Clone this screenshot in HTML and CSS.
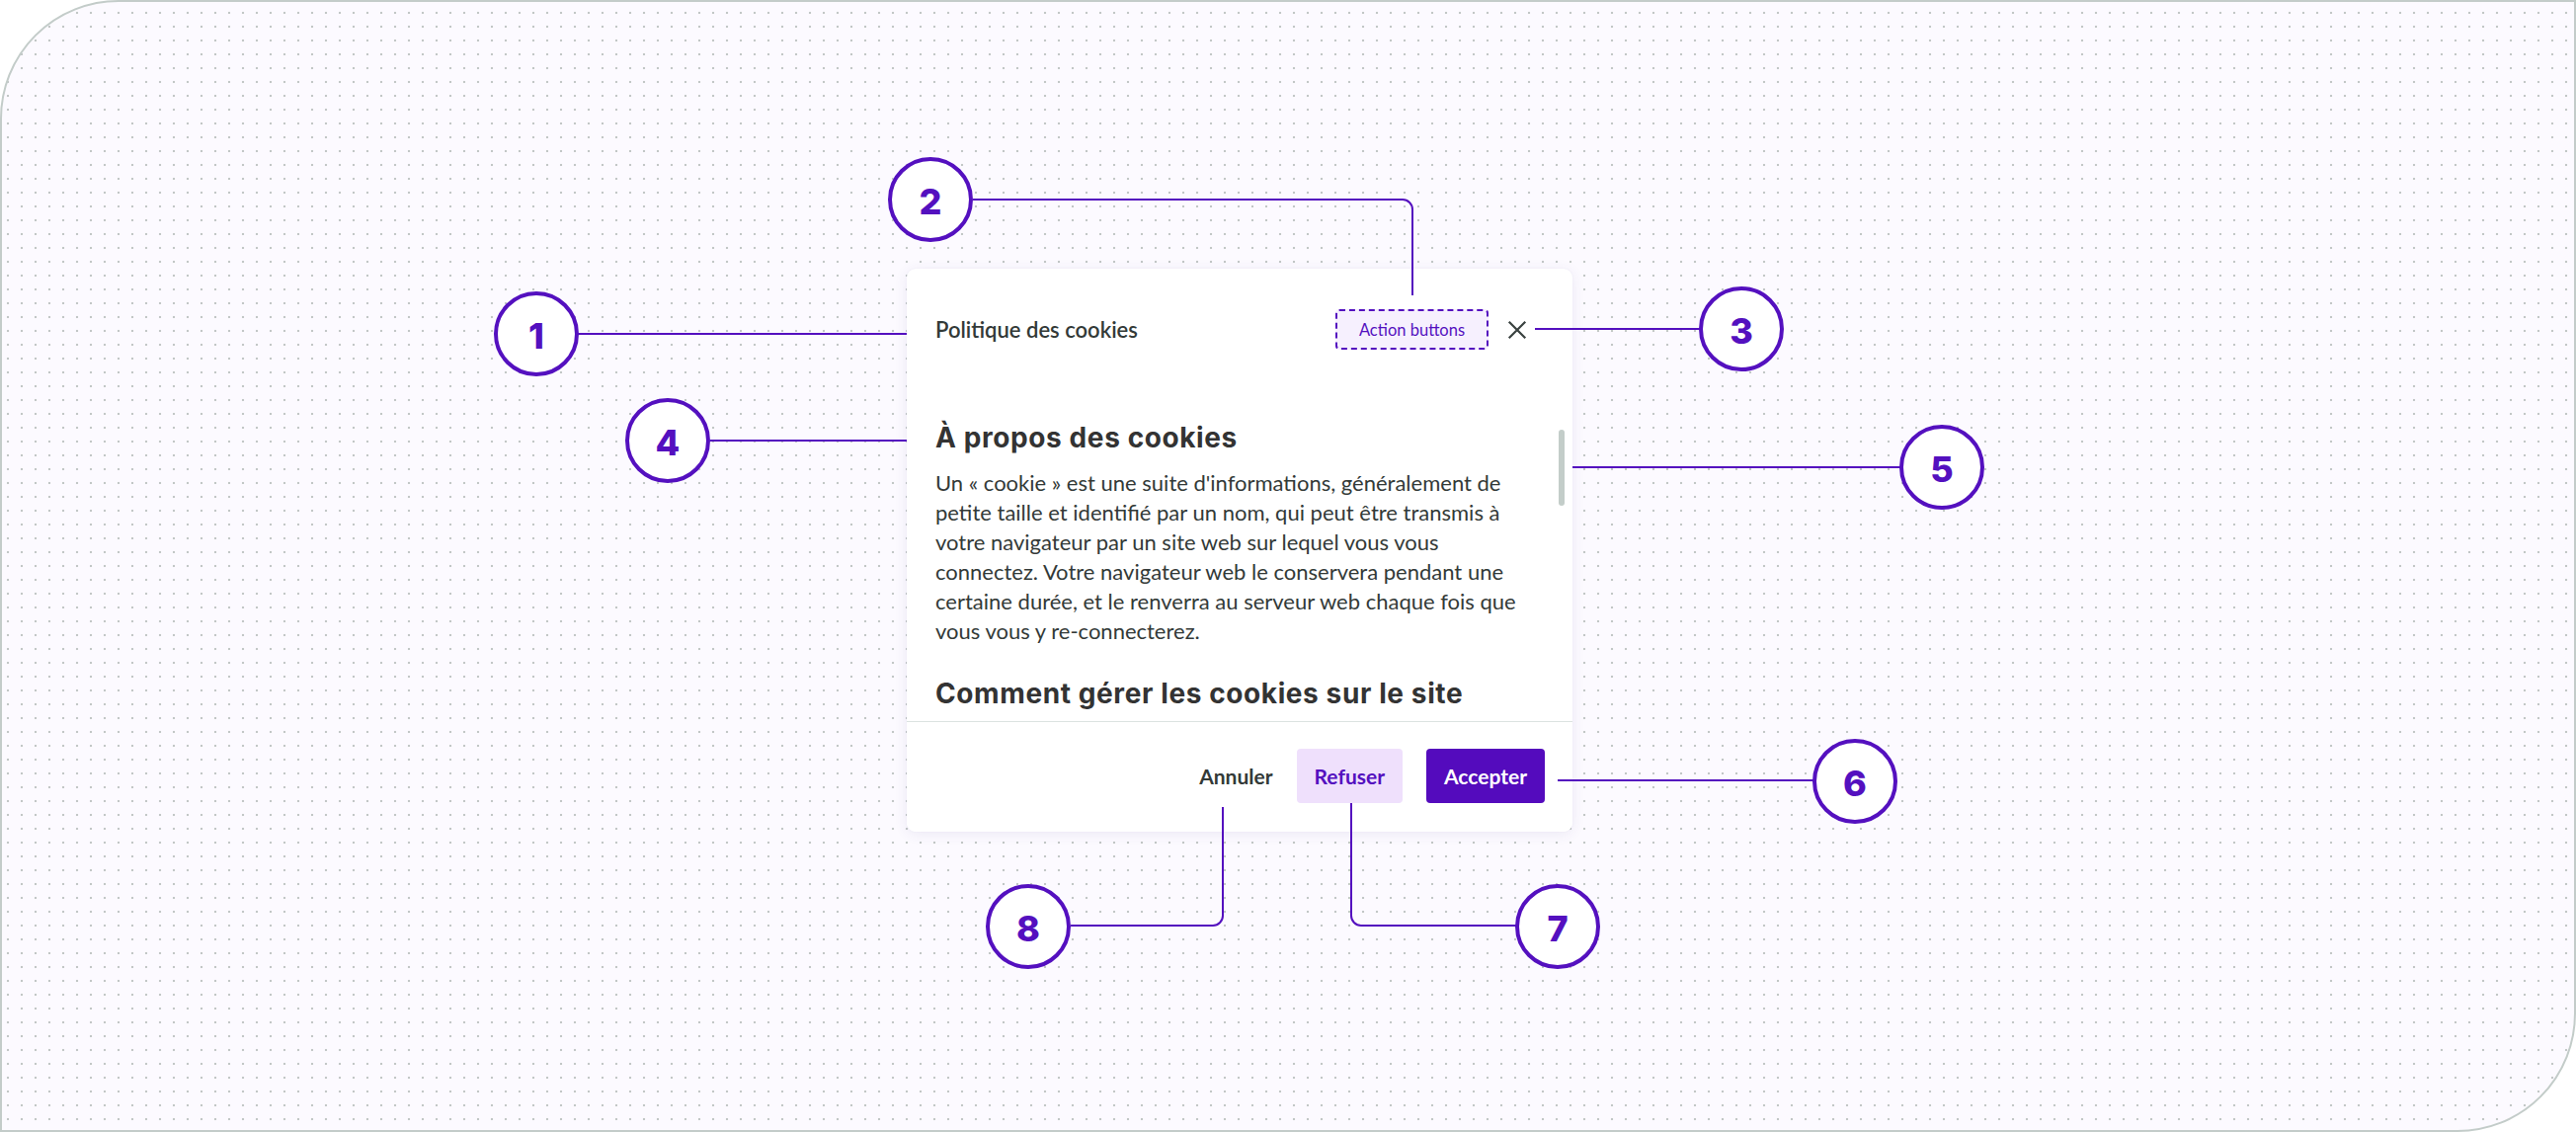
FILE: index.html
```html
<!DOCTYPE html>
<html lang="fr">
<head>
<meta charset="utf-8">
<title>Politique des cookies – annotations</title>
<link rel="stylesheet" href="styles.css">
</head>
<body>
<div class="frame">
  <div class="dialog">
    <div class="dialog-header">
      <h1 class="dialog-title">Politique des cookies</h1>
      <div class="header-actions">
        <span class="action-slot">Action buttons</span>
        <button class="close-btn" aria-label="Fermer">
          <svg viewBox="0 0 20 20" width="20" height="20"><path d="M2.5 2.5 L17.5 17.5 M17.5 2.5 L2.5 17.5" fill="none" stroke="currentColor" stroke-width="2.2" stroke-linecap="square"/></svg>
        </button>
      </div>
    </div>
    <div class="dialog-body">
      <h2 class="section-title">À propos des cookies</h2>
      <p class="section-text">Un « cookie » est une suite d'informations, généralement de<br>
        petite taille et identifié par un nom, qui peut être transmis à<br>
        votre navigateur par un site web sur lequel vous vous<br>
        connectez. Votre navigateur web le conservera pendant une<br>
        certaine durée, et le renverra au serveur web chaque fois que<br>
        vous vous y re-connecterez.</p>
      <h2 class="section-title section-title--next">Comment gérer les cookies sur le site euro.fr ?</h2>
      <div class="scroll-thumb"></div>
    </div>
    <div class="dialog-footer">
      <button class="btn btn-tertiary">Annuler</button>
      <button class="btn btn-secondary">Refuser</button>
      <button class="btn btn-primary">Accepter</button>
    </div>
  </div>
</div>
<svg class="callouts" width="2608" height="1146" viewBox="0 0 2608 1146">
  <g class="leader">
    <path d="M585 338 H918"/>
    <path d="M985 202 H1420 A10 10 0 0 1 1430 212 V299"/>
    <path d="M1554 333 H1722"/>
    <path d="M719 446 H918"/>
    <path d="M1592 473 H1925"/>
    <path d="M1577 790 H1837"/>
    <path d="M1368 813 V927 A10 10 0 0 0 1378 937 H1536"/>
    <path d="M1238 817 V927 A10 10 0 0 1 1228 937 H1084"/>
  </g>
  <g class="badge"><circle cx="543" cy="338" r="41"/><text x="543" y="340">1</text></g>
  <g class="badge"><circle cx="942" cy="202" r="41"/><text x="942" y="204">2</text></g>
  <g class="badge"><circle cx="1763" cy="333" r="41"/><text x="1763" y="335">3</text></g>
  <g class="badge"><circle cx="676" cy="446" r="41"/><text x="676" y="448">4</text></g>
  <g class="badge"><circle cx="1966" cy="473" r="41"/><text x="1966" y="475">5</text></g>
  <g class="badge"><circle cx="1878" cy="791" r="41"/><text x="1878" y="793">6</text></g>
  <g class="badge"><circle cx="1577" cy="938" r="41"/><text x="1577" y="940">7</text></g>
  <g class="badge"><circle cx="1041" cy="938" r="41"/><text x="1041" y="940">8</text></g>
</svg>
</body>
</html>
```
FILE: styles.css
```css
* { box-sizing: border-box; }

html, body {
  margin: 0;
  padding: 0;
  background: #ffffff;
}

body {
  position: relative;
  width: 2608px;
  height: 1146px;
  overflow: hidden;
  font-family: "Lato", "Noto Sans", sans-serif;
  color: #333a38;
}

.frame {
  width: 2608px;
  height: 1146px;
  border: 2px solid #c3ccc9;
  border-radius: 120px 0 120px 0;
  background-color: #fcfaff;
  background-image: radial-gradient(circle at center, #c2c7c6 0, #c2c7c6 1px, rgba(194, 199, 198, 0) 1.6px);
  background-size: 14px 14px;
  background-position: -1px 4px;
  padding: 270px 0 0 916px;
}

.dialog {
  width: 674px;
  height: 570px;
  background: #ffffff;
  border-radius: 9px;
  box-shadow: 0 2px 14px rgba(70, 50, 130, 0.09), 0 0 2px rgba(70, 50, 130, 0.06);
  display: flex;
  flex-direction: column;
  overflow: hidden;
}

.dialog-header {
  display: flex;
  align-items: center;
  justify-content: space-between;
  padding: 41px 36px 0 29px;
  height: 82px;
}

.dialog-title {
  margin: 0;
  font-size: 22px;
  font-weight: 600;
  line-height: 41px;
  color: #333a38;
}

.header-actions {
  display: flex;
  align-items: center;
  gap: 9px;
}

.action-slot {
  display: inline-flex;
  align-items: center;
  justify-content: center;
  width: 155px;
  height: 41px;
  border: 2px dashed #5410bf;
  border-radius: 4px;
  background: #f6f0fe;
  color: #5410bf;
  font-size: 16.5px;
}

.close-btn {
  width: 40px;
  height: 40px;
  padding: 0;
  border: 0;
  background: transparent;
  color: #3a4240;
  display: flex;
  align-items: center;
  justify-content: center;
}

.dialog-body {
  position: relative;
  flex: 1;
  overflow: hidden;
  padding: 71px 37px 0 29px;
}

.section-title {
  margin: 0;
  max-width: 560px;
  font-family: "Inter", "Noto Sans", sans-serif;
  font-weight: 700;
  font-size: 28px;
  line-height: 36px;
  letter-spacing: 0.6px;
  color: #333333;
}

.section-title--next {
  margin-top: 28px;
  line-height: 40px;
}

.section-text {
  margin: 13px 0 0;
  font-size: 22px;
  line-height: 30px;
  color: #333a38;
}

.scroll-thumb {
  position: absolute;
  left: 660px;
  top: 81px;
  width: 6px;
  height: 77px;
  border-radius: 3px;
  background: #c3cdc9;
}

.dialog-footer {
  display: flex;
  justify-content: flex-end;
  align-items: center;
  gap: 24px;
  border-top: 1px solid #dce3e1;
  padding: 27px 28px 29px;
  height: 112px;
  background: #ffffff;
}

.btn {
  height: 55px;
  padding: 0 18px;
  border: 0;
  border-radius: 4px;
  font-family: "Lato", "Noto Sans", sans-serif;
  font-size: 21px;
  font-weight: 700;
  line-height: 55px;
}

.btn-tertiary {
  padding: 0;
  background: transparent;
  color: #333a38;
}

.btn-secondary {
  background: #efe0fc;
  color: #5410bf;
}

.btn-primary {
  background: #540bbd;
  color: #ffffff;
}

.callouts {
  position: absolute;
  top: 0;
  left: 0;
  pointer-events: none;
}

.leader path {
  fill: none;
  stroke: #5410bf;
  stroke-width: 2;
}

.badge circle {
  fill: #ffffff;
  stroke: #5410bf;
  stroke-width: 4;
}

.badge text {
  font-family: "Inter", "Noto Sans", sans-serif;
  font-weight: 800;
  font-size: 36px;
  fill: #5410bf;
  text-anchor: middle;
  dominant-baseline: central;
}
```
